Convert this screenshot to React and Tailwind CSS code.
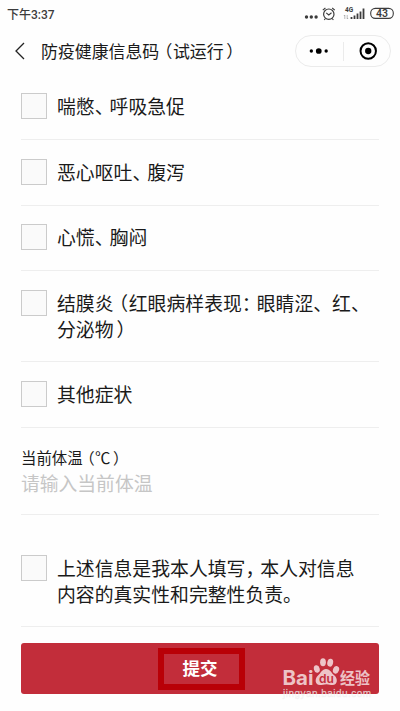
import clsx from 'clsx';

// Half-width punctuation, padded back out to about 0.78em
function Comma({ children = '、' }) {
  return <span className="mr-[0.29em] [font-feature-settings:'halt']">{children}</span>;
}

function Open() {
  return <span className="ml-[0.28em] mr-[0.03em] [font-feature-settings:'halt']">（</span>;
}

function Close() {
  return <span className="ml-[0.16em] [font-feature-settings:'halt']">）</span>;
}

function StatusBar() {
  return (
    <div className="flex h-7 items-center justify-between pl-[7px] pr-[6px] text-[#3c3c3c]">
      <span className="text-[12px] font-medium leading-7">
        下午<span className="font-['Roboto'] text-[12px]">3:37</span>
      </span>
      <svg width="92" height="20" viewBox="0 0 92 20" fill="none" stroke="currentColor">
        <g fill="currentColor" stroke="none">
          <circle cx="4.5" cy="13" r="1.7" />
          <circle cx="9.3" cy="13" r="1.7" />
          <circle cx="14.1" cy="13" r="1.7" />
        </g>
        <circle cx="26.8" cy="10.2" r="5.2" strokeWidth="1.2" />
        <path d="M24.2 8.800l2.6 2.2L29.5 8.800M20.8 6.2l2.6-2.2M32.8 6.2L30.2 4M23.5 14.5l-1.3 1.5M30.1 14.5l1.3 1.5" strokeWidth="1.1" />
        <text x="43" y="8" fontSize="6.5" fontFamily="Roboto" fontWeight="700" fill="currentColor" stroke="none">4G</text>
        <path d="M42.800 15v-4l-1 1M45.200 11v4l1-1" stroke="#777" strokeWidth=".5" />
        <path d="M49.500 13v2M52.500 11.5v3.5M55.500 9.5V15M58.500 7.5V15M61.500 4.5V15" strokeWidth="1.8" />
        <rect x="68.700" y="4.400" width="22.600" height="10" rx="4.600" strokeWidth="1.1" />
        <text x="80" y="13.200" textAnchor="middle" fontSize="10.500" fontFamily="Roboto" fontWeight="600" fill="currentColor" stroke="none">43</text>
      </svg>
    </div>
  );
}

function NavBar() {
  return (
    <div className="flex h-[46px] items-center pl-[14px] pr-[9px]">
      <svg width="12" height="18" viewBox="0 0 12 18" fill="none" stroke="#222" strokeWidth="1.3">
        <path d="M10 1L2 9l8 8" />
      </svg>
      <h1 className="ml-[15px] flex-1 whitespace-nowrap text-[16.9px] leading-6 text-[#1a1a1a]">
        防疫健康信息码<Open />试运行<Close />
      </h1>
      <div className="flex h-8 w-[96px] items-center rounded-full border border-[#ebebeb]">
        <svg className="flex-1" height="20" viewBox="0 0 47 20">
          <circle cx="15.5" cy="10" r="1.7" />
          <circle cx="23" cy="10" r="2.9" />
          <circle cx="30.5" cy="10" r="1.7" />
        </svg>
        <div className="h-[19px] w-px bg-[#ebebeb]" />
        <svg className="flex-1" height="20" viewBox="0 0 47 20">
          <circle cx="24.5" cy="10" r="7.8" fill="none" stroke="#000" strokeWidth="2" />
          <circle cx="24.5" cy="10" r="3.2" />
        </svg>
      </div>
    </div>
  );
}

function CheckRow({ children, className }) {
  return (
    <label className={clsx('flex items-start border-b border-[#eeeeee]', className)}>
      <span className="h-[26px] w-[26px] shrink-0 border border-[#cbcbcb] bg-[#fafafa]" />
      <span className="ml-[10px] whitespace-nowrap text-[18.85px] leading-[26px] text-[#1a1a1a]">
        {children}
      </span>
    </label>
  );
}

function Watermark() {
  return (
    <svg className="absolute left-[280px] top-[652px]" width="98" height="50" viewBox="0 0 98 50" fill="#fff" fillOpacity=".72">
      <text x="2.5" y="32.500" fontSize="20" fontFamily="Inter" fontWeight="700" textLength="31" lengthAdjust="spacingAndGlyphs">Bai</text>
      <ellipse cx="36.8" cy="17" rx="2.9" ry="3.8" transform="rotate(-15 36.8 17)" />
      <ellipse cx="43" cy="10.2" rx="2.9" ry="4" />
      <ellipse cx="50.2" cy="10.7" rx="2.9" ry="4" transform="rotate(12 50.2 10.7)" />
      <ellipse cx="56" cy="17.8" rx="3" ry="3.9" transform="rotate(20 56 17.8)" />
      <path d="M46 17c-4 0-5 4-8 6.500-3.500 3-3.200 9.500 2 9.500 2 0 4-.8 6.500-.8s4 .8 6 .8c5.200 0 5.500-6.500 2-9.500C51 21 50.500 17 46 17z" />
      <text x="46.500" y="30.500" textAnchor="middle" fontSize="12" fontFamily="Inter" fontWeight="600" fill="#c22d3a" fillOpacity="1">du</text>
      <text x="60" y="31.500" fontSize="15.500" fontFamily="Noto Sans CJK SC" fontWeight="700" textLength="30" lengthAdjust="spacingAndGlyphs">经验</text>
      <text x="3" y="44.500" fontSize="10" fontFamily="Liberation Sans" stroke="#d8d8d8" strokeOpacity=".35" strokeWidth=".5" textLength="88">jingyan.baidu.com</text>
    </svg>
  );
}

export default function App() {
  return (
    <div className="relative h-[711px] w-[400px] overflow-hidden bg-[#fefefe] font-['Noto_Sans_CJK_SC',sans-serif]">
      <StatusBar />
      <NavBar />
      <main className="px-[21px] pt-[19px]">
        <CheckRow className="h-[47px]">喘憋<Comma />呼吸急促</CheckRow>
        <CheckRow className="h-[66px] pt-[19px]">恶心呕吐<Comma />腹泻</CheckRow>
        <CheckRow className="h-[65px] pt-[18px]">心慌<Comma />胸闷</CheckRow>
        <CheckRow className="h-[91px] pt-[19px]">
          结膜炎<Open />红眼病样表现<Comma>：</Comma>眼睛涩、红、
          <br />
          分泌物<Close />
        </CheckRow>
        <CheckRow className="h-[66px] pt-[19px]">其他症状</CheckRow>
        <div className="h-[87px] border-b border-[#eeeeee] pt-[17px]">
          <div className="text-[15.4px] leading-6 text-[#1a1a1a]">
            当前体温<Open />℃<Close />
          </div>
          <div className="mt-px text-[18.8px] leading-[26px] text-[#c6c6c6]">请输入当前体温</div>
        </div>
        <CheckRow className="h-[112px] pt-[40px]">
          上述信息是我本人填写<Comma>，</Comma>本人对信息
          <br />
          内容的真实性和完整性负责。
        </CheckRow>
        <button className="mt-4 flex h-[51px] w-[358px] items-center justify-center rounded-[3px] bg-[#c22d3a] text-[17.5px] font-bold text-white">
          提交
        </button>
      </main>
      <div className="absolute left-[158px] top-[648px] h-[42px] w-[87px] border-[6px] border-[#b90007]" />
      <Watermark />
    </div>
  );
}
